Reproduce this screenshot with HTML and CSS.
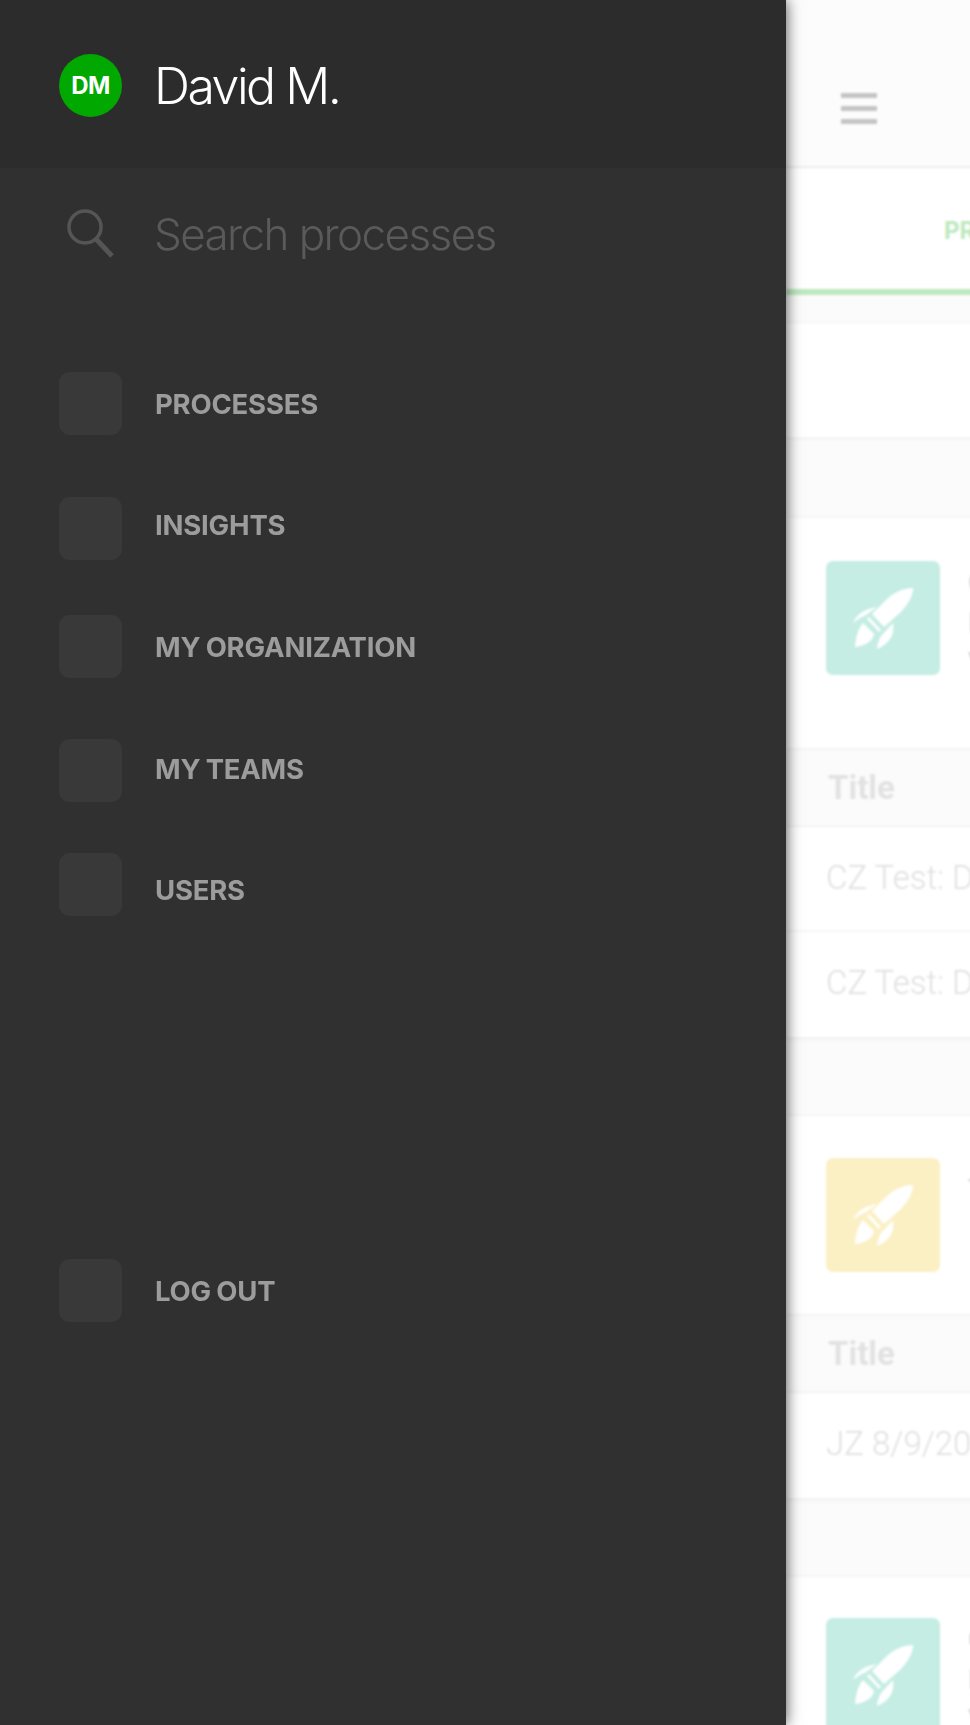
FILE: index.html
```html
<!DOCTYPE html>
<html lang="en">
<head>
<meta charset="utf-8">
<title>Processes</title>
<link rel="stylesheet" href="styles.css">
</head>
<body>
<svg class="defs" width="0" height="0" aria-hidden="true">
  <symbol id="rocket" viewBox="0 0 114 114">
    <path d="M87 27C78 27 69 31 62 37L46 53 58 66 75 51C81 44 87 36 87 27Z"/>
    <path d="M43 56L55 69 53 71 41 58Z"/>
    <path d="M37 62L48 73C47 80 39 85 29 86 30 75 32 68 37 62Z"/>
    <path d="M27 62C30 54 38 48 51 46L40 54 36 56C33 57 30 60 27 62Z"/>
    <path d="M51 88C51 85 53 78 55 75L67 62C69 74 63 83 51 88Z"/>
  </symbol>
</svg>
<aside class="drawer">
  <header class="user">
    <div class="avatar">DM</div>
    <div class="user-name">David M.</div>
  </header>
  <div class="search">
    <svg class="search-icon" viewBox="0 0 48 52" fill="none" stroke="#555" aria-hidden="true">
      <circle cx="19" cy="19" r="16" stroke-width="3.5"/>
      <path d="M30 31L46 48" stroke-width="5"/>
    </svg>
    <div class="search-text">Search processes</div>
  </div>
  <nav class="nav">
    <div class="nav-row"><span class="nav-icon"></span><span class="nav-label">PROCESSES</span></div>
    <div class="nav-row"><span class="nav-icon icon-low3"></span><span class="nav-label">INSIGHTS</span></div>
    <div class="nav-row"><span class="nav-icon"></span><span class="nav-label">MY ORGANIZATION</span></div>
    <div class="nav-row"><span class="nav-icon icon-low2"></span><span class="nav-label">MY TEAMS</span></div>
    <div class="nav-row"><span class="nav-icon icon-high6"></span><span class="nav-label">USERS</span></div>
  </nav>
  <div class="nav logout">
    <div class="nav-row"><span class="nav-icon"></span><span class="nav-label">LOG OUT</span></div>
  </div>
</aside>
<main class="main">
  <div class="blur">
    <div class="topbar">
      <div class="burger"><i></i><i></i><i></i></div>
    </div>
    <div class="tabs"><span class="tab">PROCESSES</span></div>
    <div class="filters"></div>
    <section class="card card-first">
      <div class="card-head">
        <div class="tile tile-teal"><svg class="rocket"><use href="#rocket"/></svg></div>
        <div class="card-lines"><p>CZ Test Process</p><p>In progress</p><p>View</p></div>
      </div>
      <div class="thead">Title</div>
      <div class="tr">CZ Test: Draft one</div>
      <div class="tr">CZ Test: Draft two</div>
    </section>
    <section class="card">
      <div class="card-head card-head-short">
        <div class="tile tile-yellow"><svg class="rocket"><use href="#rocket"/></svg></div>
        <div class="card-lines card-lines-single"><p>Test Process</p></div>
      </div>
      <div class="thead">Title</div>
      <div class="tr">JZ 8/9/2018 run</div>
    </section>
    <section class="card card-last">
      <div class="card-head">
        <div class="tile tile-teal"><svg class="rocket"><use href="#rocket"/></svg></div>
        <div class="card-lines"><p>CZ Test Process</p><p>In progress</p><p>View</p></div>
      </div>
    </section>
  </div>
</main>
</body>
</html>
```
FILE: styles.css
```css
* { box-sizing: border-box; }
html, body { margin: 0; height: 1725px; overflow: hidden; }
body { display: flex; background: #fbfbfb; font-family: Inter, "Liberation Sans", sans-serif; }
.defs { position: absolute; }

.drawer {
  flex: 0 0 786px;
  height: 1725px;
  display: flex;
  flex-direction: column;
  background: #303030;
  box-shadow: 0 0 14px rgba(0, 0, 0, .7);
  position: relative;
  z-index: 2;
}
.user {
  height: 168px;
  background: #2c2c2c;
  display: flex;
  align-items: flex-start;
  padding: 54px 0 0 59px;
  gap: 32px;
}
.avatar {
  width: 63px;
  height: 63px;
  border-radius: 50%;
  background: #00a800;
  color: #fff;
  font-weight: 700;
  font-size: 24px;
  letter-spacing: -.5px;
  display: flex;
  align-items: center;
  justify-content: center;
}
.user-name {
  color: #fff;
  font-weight: 300;
  font-size: 50px;
  line-height: 64px;
  letter-spacing: -2.5px;
}
.search {
  display: flex;
  align-items: center;
  padding: 40px 0 0 66px;
  gap: 40px;
}
.search-icon { width: 48px; height: 52px; }
.search-text {
  color: #5a5a5a;
  font-weight: 300;
  font-size: 44px;
  line-height: 52px;
  letter-spacing: -1.6px;
}
.nav {
  display: flex;
  flex-direction: column;
  padding: 83px 0 0 59px;
}
.logout { padding-top: 279px; }
.nav-row { display: flex; align-items: center; gap: 33px; height: 121.6px; }
.nav-icon {
  width: 63px;
  height: 63px;
  border-radius: 11px;
  background: #393939;
}
.icon-low3 { margin-top: 6px; }
.icon-low2 { margin-top: 4px; }
.icon-high6 { margin-bottom: 12px; }
.nav-label {
  color: #9c9c9c;
  font-weight: 700;
  font-size: 27.5px;
  letter-spacing: -.2px;
  word-spacing: -1px;
}

.main { flex: 1; min-width: 0; overflow: hidden; }
.blur { width: 700px; filter: blur(.85px); }
.topbar {
  height: 168px;
  background: #fcfcfc;
  border-bottom: 2px solid #ececec;
  padding: 93px 0 0 55px;
}
.burger { display: flex; flex-direction: column; gap: 8px; width: 36px; }
.burger i { display: block; height: 5px; background: #c4c4c4; }
.tabs {
  height: 127px;
  background: #fff;
  border-bottom: 6px solid #bde9bf;
  padding: 48px 0 0 158px;
}
.tab { color: #bde9bf; font-weight: 700; font-size: 24px; }
.filters {
  height: 115px;
  margin-top: 27px;
  background: #fff;
  border-top: 1px solid #f3f3f3;
  box-shadow: 0 2px 4px rgba(0, 0, 0, .04);
}
.card {
  margin-top: 78px;
  background: #fff;
  border-top: 1px solid #f5f5f5;
  box-shadow: 0 2px 5px rgba(0, 0, 0, .05);
}
.card-first { margin-top: 80px; }
.card-head {
  height: 230px;
  padding: 42px 0 0 40px;
  display: flex;
  gap: 28px;
}
.card-first .card-head { padding-top: 43px; }
.card-last .card-head { padding-top: 41px; }
.card-head-short { height: 198px; }
.tile {
  width: 114px;
  height: 114px;
  border-radius: 7px;
  flex: none;
}
.tile-teal { background: #c5ede4; }
.tile-yellow { background: #fbf0c4; }
.rocket { display: block; width: 114px; height: 114px; fill: #fff; }
.card-lines {
  color: #cfcfcf;
  font-family: Roboto, sans-serif;
  font-size: 28px;
  line-height: 40px;
  padding-top: 2px;
}
.card-lines-single { padding-top: 12px; }
.card-lines p { margin: 0; }
.thead {
  height: 79px;
  background: #fbfbfb;
  border-top: 2px solid #f4f4f4;
  border-bottom: 2px solid #f4f4f4;
  padding: 18px 0 0 42px;
  color: #e2e2e2;
  font-family: Roboto, sans-serif;
  font-weight: 700;
  font-size: 33px;
}
.tr {
  height: 105px;
  padding: 31px 0 0 40px;
  border-bottom: 2px solid #f6f6f6;
  color: #e0e0e0;
  font-family: Roboto, sans-serif;
  font-weight: 300;
  font-size: 33px;
}
.tr:last-child { border-bottom: 0; }
```
